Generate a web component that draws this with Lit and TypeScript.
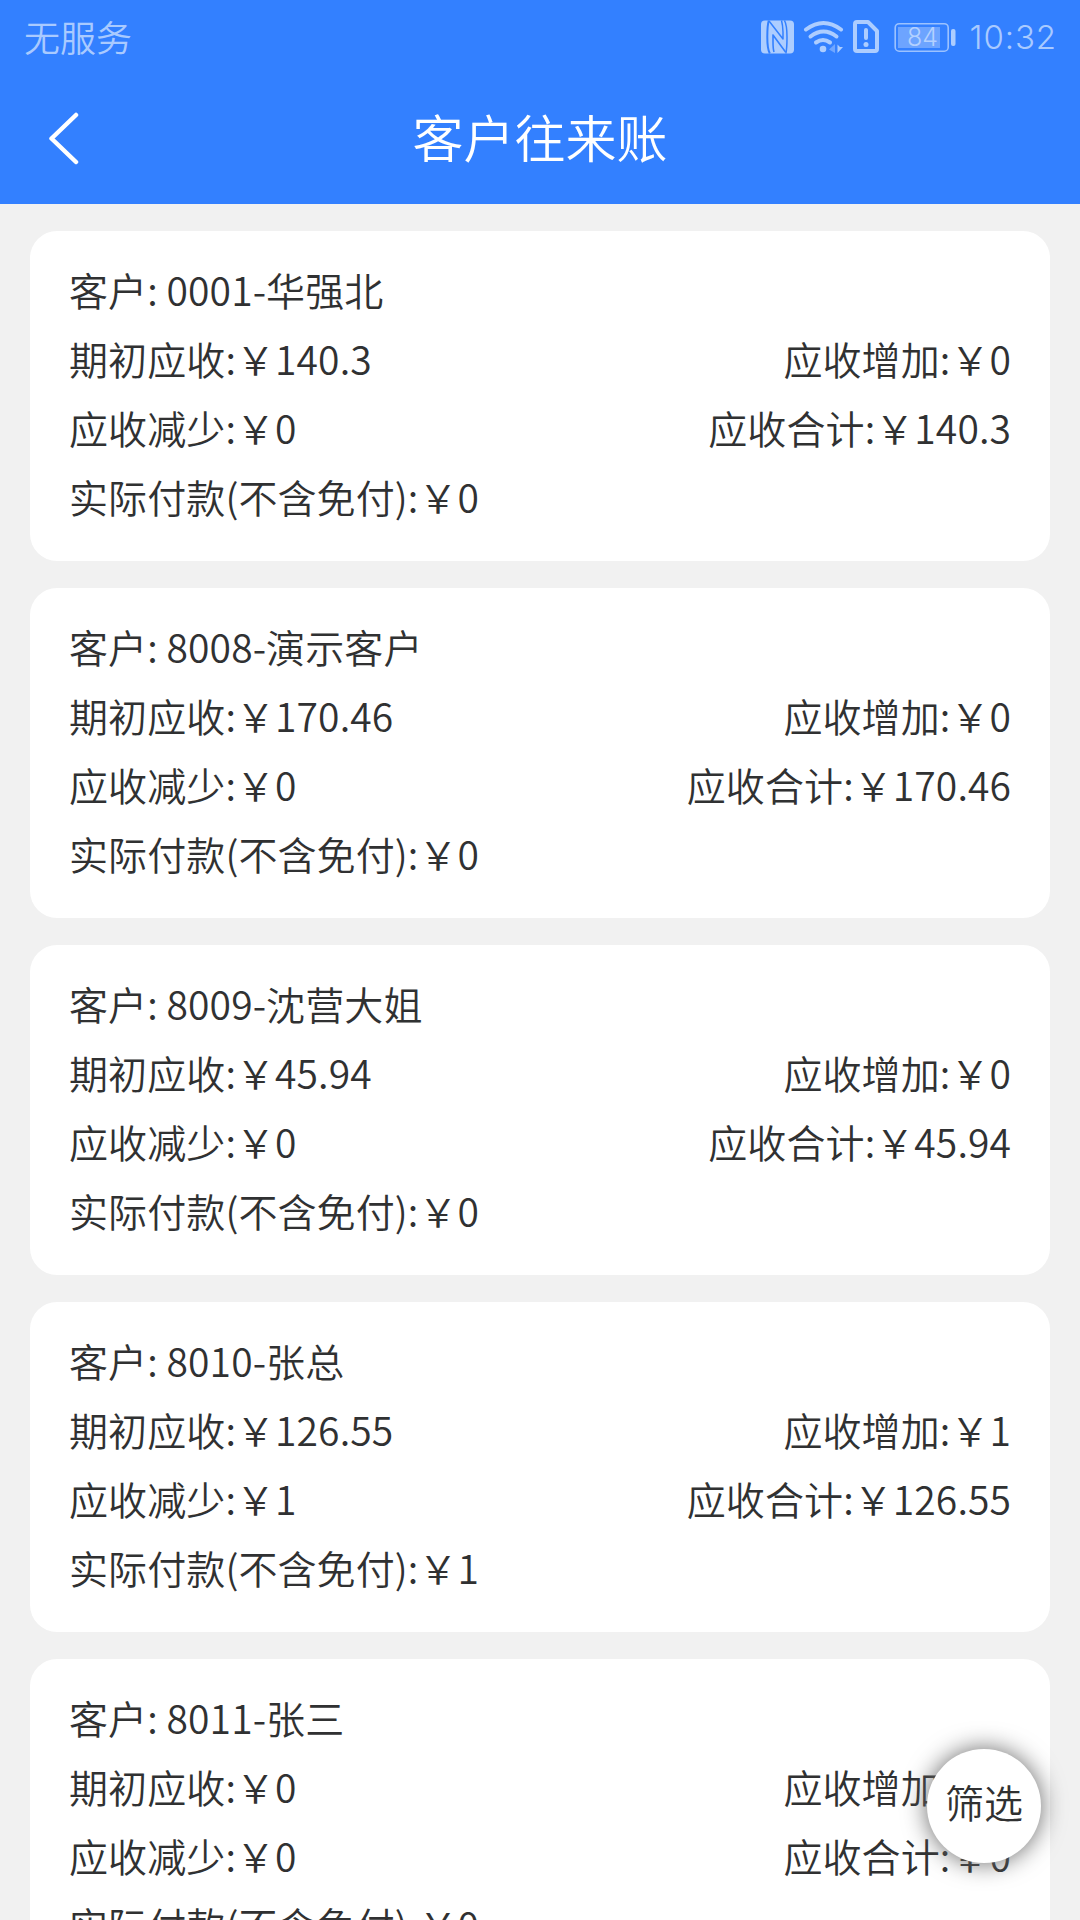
import { LitElement, html, css, svg } from "lit";
import { customElement, property } from "lit/decorators.js";

interface Account {
  customer: string;
  opening: string;
  increase: string;
  decrease: string;
  total: string;
  paid: string;
}

const ACCOUNTS: Account[] = [
  { customer: "0001-华强北", opening: "140.3", increase: "0", decrease: "0", total: "140.3", paid: "0" },
  { customer: "8008-演示客户", opening: "170.46", increase: "0", decrease: "0", total: "170.46", paid: "0" },
  { customer: "8009-沈营大姐", opening: "45.94", increase: "0", decrease: "0", total: "45.94", paid: "0" },
  { customer: "8010-张总", opening: "126.55", increase: "1", decrease: "1", total: "126.55", paid: "1" },
  { customer: "8011-张三", opening: "0", increase: "0", decrease: "0", total: "0", paid: "0" },
];

@customElement("status-bar")
class StatusBar extends LitElement {
  static styles = css`
    :host {
      display: flex;
      justify-content: space-between;
      height: 72px;
      padding: 0 23px 0 24px;
      color: #a9caff;
    }
    .carrier {
      font-size: 36px;
      line-height: 72px;
      font-weight: 350;
    }
    .right {
      display: flex;
      align-items: center;
      height: 74px;
    }
    .icons {
      display: block;
    }
    .level {
      font: 350 25px/1 Inter, "Noto Sans CJK SC", sans-serif;
    }
    .clock {
      font: 350 33px/74px Inter, "Noto Sans CJK SC", sans-serif;
      letter-spacing: 0.9px;
      width: 94px;
      margin-left: 6px;
      text-align: right;
      white-space: nowrap;
    }
  `;

  render() {
    return html`
      <span class="carrier">无服务</span>
      <div class="right">
        <svg class="icons" width="196" height="34" viewBox="761 19 196 34" fill="none">
          ${svg`
          <rect x="761" y="19.500" width="33" height="33" rx="4" fill="#adcdff"/>
          <path d="M768.800 19.500 Q767.300 24 767.300 36 T769.800 52.500" stroke="#3380ff" stroke-width="2"/>
          <path d="M784.500 19.500 Q787 24 787 36 T785.800 52.500" stroke="#3380ff" stroke-width="1.500"/>
          <path d="M769 20 L783 38 V31 Q782.800 24 781.500 19.500" stroke="#3380ff" stroke-width="1.500" stroke-linejoin="round"/>
          <path d="M785.500 51 L773 34 V41 Q773 48 774 51" stroke="#3380ff" stroke-width="1.600" stroke-linejoin="round"/>
          <path d="M806 28.500 Q823.500 15.500 841 28.500" stroke="#adcdff" stroke-width="4" stroke-linecap="round"/>
          <path d="M810.500 35.500 Q823.500 25.500 836.500 35.500" stroke="#adcdff" stroke-width="4" stroke-linecap="round"/>
          <path d="M816 41.500 Q823 36.500 830 41.500" stroke="#adcdff" stroke-width="4" stroke-linecap="round"/>
          <circle cx="823" cy="48" r="3.300" fill="#adcdff"/>
          <path d="M835 43 V52 L829 48.500Z" fill="#70a6ff"/>
          <path d="M837.500 43.500 V52 L843 46 H840Z" fill="#adcdff"/>
          <path d="M857 21 H868 L877 30 V48 Q877 50 875 50 H857 Q855 50 855 48 V23 Q855 21 857 21Z" stroke="#adcdff" stroke-width="4" stroke-linejoin="round"/>
          <path d="M866 29 V37" stroke="#adcdff" stroke-width="4" stroke-linecap="round"/>
          <circle cx="866" cy="43.500" r="2.500" fill="#adcdff"/>
          <rect x="895.200" y="22.700" width="53" height="27.500" rx="4" stroke="#9cc2ff" stroke-width="1.600"/>
          <rect x="898" y="26" width="42" height="21" fill="#6da4ff"/>
          <rect x="951" y="28" width="4.500" height="17" rx="2" fill="#adcdff"/>
          <text class="level" x="922.500" y="45.300" text-anchor="middle" fill="#b4d1ff">84</text>`}
        </svg>
        <span class="clock">10:32</span>
      </div>
    `;
  }
}

@customElement("account-card")
class AccountCard extends LitElement {
  @property({ attribute: false }) account!: Account;

  static styles = css`
    :host {
      display: flex;
      flex-direction: column;
      flex: none;
      box-sizing: border-box;
      height: 330px;
      padding: 24px 39px 30px;
      border-radius: 27px;
      background: #fff;
      color: #303132;
      font-size: 39px;
      font-weight: 350;
      letter-spacing: 0.1px;
      line-height: 69px;
    }
    .row {
      display: flex;
      justify-content: space-between;
      height: 69px;
      white-space: nowrap;
    }
  `;

  render() {
    const a = this.account;
    return html`
      <div class="row"><span>客户: ${a.customer}</span></div>
      <div class="row"><span>期初应收:￥${a.opening}</span><span>应收增加:￥${a.increase}</span></div>
      <div class="row"><span>应收减少:￥${a.decrease}</span><span>应收合计:￥${a.total}</span></div>
      <div class="row"><span>实际付款(不含免付):￥${a.paid}</span></div>
    `;
  }
}

@customElement("app-root")
class AppRoot extends LitElement {
  static styles = css`
    :host {
      display: flex;
      flex-direction: column;
      position: relative;
      height: 1920px;
      overflow: hidden;
      background: #f1f1f1;
      font-family: "Noto Sans CJK SC", sans-serif;
    }
    .top {
      flex: none;
      height: 204px;
      background: #3380ff;
    }
    .nav {
      display: grid;
      grid-template-columns: 120px 1fr 120px;
      align-items: center;
      height: 132px;
    }
    .back {
      margin-left: 47px;
    }
    .title {
      margin: 0;
      height: 132px;
      text-align: center;
      color: #fff;
      font-size: 51px;
      font-weight: 350;
      line-height: 129px;
    }
    .list {
      display: flex;
      flex-direction: column;
      gap: 27px;
      padding: 27px 30px 0;
    }
    .filter {
      position: absolute;
      left: 927px;
      top: 1749px;
      width: 114px;
      height: 114px;
      border-radius: 50%;
      background: #fff;
      box-shadow: 0 0 24px #666;
      color: #303132;
      font-size: 39px;
      font-weight: 350;
      line-height: 105px;
      text-align: center;
    }
  `;

  render() {
    return html`
      <header class="top">
        <status-bar></status-bar>
        <div class="nav">
          <svg class="back" width="34" height="54" viewBox="0 0 34 54" fill="none">
            <path d="M29 4 L4.500 27.500 L29 51" stroke="#fff" stroke-width="4.500" stroke-linecap="round" stroke-linejoin="round" />
          </svg>
          <h1 class="title">客户往来账</h1>
        </div>
      </header>
      <main class="list">
        ${ACCOUNTS.map((a) => html`<account-card .account=${a}></account-card>`)}
      </main>
      <div class="filter" role="button">筛选</div>
    `;
  }
}
